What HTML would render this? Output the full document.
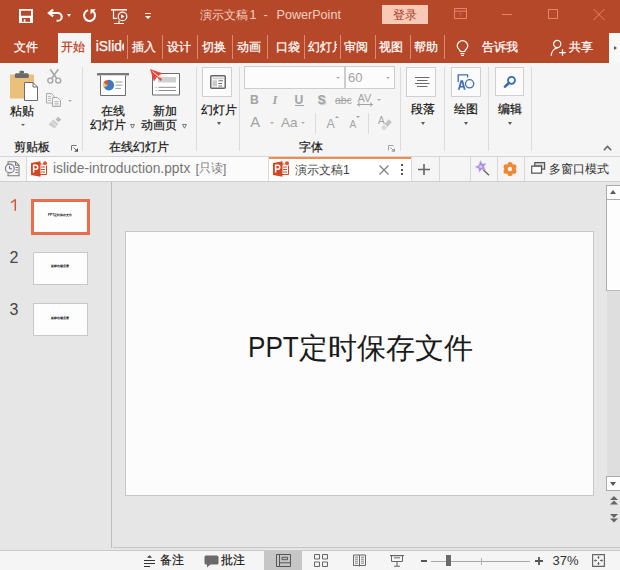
<!DOCTYPE html>
<html><head><meta charset="utf-8">
<style>
*{margin:0;padding:0;box-sizing:border-box}
html,body{width:620px;height:570px;overflow:hidden;background:#E6E6E6;font-family:"Liberation Sans",sans-serif}
.a{position:absolute}
.t{position:absolute;white-space:nowrap;line-height:1}
svg{position:absolute;overflow:visible}
.tsep{position:absolute;top:35px;width:1px;height:24px;background:#D98A74}
.tab{color:#fff;font-size:12.2px;top:40.5px;-webkit-text-stroke:0.25px currentColor}
.gsep{position:absolute;top:67px;width:1px;height:84px;background:#DCDCDC}
.rl{font-size:12px;color:#141414;-webkit-text-stroke:0.2px currentColor}
.gl{font-size:12px;color:#141414;-webkit-text-stroke:0.2px currentColor}
.dd{position:absolute;width:0;height:0;border-left:3px solid transparent;border-right:3px solid transparent;border-top:3px solid #5A5A5A}
.ddl{position:absolute;width:0;height:0;border-left:2.8px solid transparent;border-right:2.8px solid transparent;border-top:2.8px solid #ADADAD}
.box{position:absolute;background:#FBFBFB;border:1px solid #D0D0D0}
.csep{position:absolute;top:157px;width:1px;height:24px;background:#D8D8D8}
.fg{color:#A3A3A3}
</style></head><body>
<!-- ===== title bar + tabs ===== -->
<div class="a" style="left:0;top:0;width:620px;height:63px;background:#B6482A"></div>
<svg style="left:19px;top:9px" width="14" height="14" viewBox="0 0 14 14"><path d="M0 0H14V14H0Z" fill="#fff"/><path d="M2 1.8H12V6.2Q12 6.8 11.4 6.8H2.6Q2 6.8 2 6.2Z" fill="#B6482A"/><path d="M3 8.9H11V12.8H3Z" fill="#B6482A"/><path d="M4.8 10.2H6.4V12.8H4.8Z" fill="#fff"/></svg>
<svg style="left:47px;top:9px" width="16" height="14" viewBox="0 0 16 14"><path d="M2 4H10.8A3.9 3.9 0 0 1 10.8 11.8H9.6" fill="none" stroke="#fff" stroke-width="2"/><path d="M6.2 0.6L1.9 4L6.2 7.4" fill="none" stroke="#fff" stroke-width="2.2"/></svg>
<div class="a" style="left:67px;top:14px;width:0;height:0;border-left:2.5px solid transparent;border-right:2.5px solid transparent;border-top:3px solid #fff"></div>
<svg style="left:82px;top:9px" width="15" height="14" viewBox="0 0 15 14"><path d="M6.1 1.1A5.5 5.5 0 1 0 11.4 2.5" fill="none" stroke="#fff" stroke-width="2"/><path d="M8.5 0.3H13.8L8.5 5.2Z" fill="#fff"/></svg>
<svg style="left:111px;top:9px" width="17" height="15" viewBox="0 0 17 15"><path d="M0 0.8H16" fill="none" stroke="#fff" stroke-width="1.5"/><path d="M2.5 1V9.4H6.2" fill="none" stroke="#fff" stroke-width="1.2"/><circle cx="11.5" cy="7.4" r="4.3" fill="none" stroke="#fff" stroke-width="1.2"/><path d="M10.2 5.2V9.6L13.5 7.4Z" fill="#fff"/><path d="M3 14.5H13 M8 11.6V14.3" fill="none" stroke="#fff" stroke-width="1.2"/></svg>
<div class="a" style="left:145px;top:12.5px;width:6px;height:1.5px;background:#fff"></div>
<div class="a" style="left:144.5px;top:15.5px;width:0;height:0;border-left:3.5px solid transparent;border-right:3.5px solid transparent;border-top:3.5px solid #fff"></div>
<div class="t" style="left:199.5px;top:8.5px;font-size:12.2px;color:#F4CEC1">演示文稿</div>
<div class="t" style="left:249.5px;top:8.5px;font-size:12.5px;color:#F4CEC1">1</div>
<div class="t" style="left:263.5px;top:8.5px;font-size:12.5px;color:#F4CEC1">-</div>
<div class="t" style="left:276.5px;top:8.5px;font-size:12.6px;color:#F4CEC1">PowerPoint</div>
<div class="a" style="left:382px;top:5px;width:46px;height:19px;background:#F8C9B7"></div>
<div class="t" style="left:392.5px;top:8.5px;font-size:12.2px;color:#A8401F">登录</div>
<svg style="left:454px;top:8px" width="13" height="11" viewBox="0 0 13 11"><path d="M0.5 0.5H12.5V10.5H0.5Z M0.5 3.2H12.5" fill="none" stroke="#E5846B" stroke-width="1"/><path d="M6.5 5V9 M4.8 6.5L6.5 4.8L8.2 6.5" fill="none" stroke="#C9604A" stroke-width="1"/></svg>
<div class="a" style="left:502px;top:14px;width:10px;height:1px;background:#E5846B"></div>
<div class="a" style="left:548px;top:9px;width:10px;height:10px;border:1px solid #E5846B"></div>
<svg style="left:593px;top:9px" width="12" height="11" viewBox="0 0 12 11"><path d="M0.5 0L11.5 11 M11.5 0L0.5 11" fill="none" stroke="#E5846B" stroke-width="1"/></svg>

<div class="a" style="left:58px;top:33px;width:33px;height:30px;background:#F5F5F5"></div>
<div class="t tab" style="left:14px">文件</div>
<div class="t tab" style="left:61px;color:#BE3E22">开始</div>
<div class="a" style="left:95px;top:33px;width:28.5px;height:29px;overflow:hidden"><div class="t tab" style="left:0.8px;top:7.3px;font-size:13.8px">iSlide</div></div>
<div class="tsep" style="left:127px"></div>
<div class="t tab" style="left:131.5px">插入</div>
<div class="tsep" style="left:162px"></div>
<div class="t tab" style="left:166.5px">设计</div>
<div class="tsep" style="left:197px"></div>
<div class="t tab" style="left:202px">切换</div>
<div class="tsep" style="left:232px"></div>
<div class="t tab" style="left:237px">动画</div>
<div class="tsep" style="left:267px"></div>
<div class="t tab" style="left:276px">口袋</div>
<div class="tsep" style="left:304px"></div>
<div class="a" style="left:307px;top:33px;width:29.5px;height:29px;overflow:hidden"><div class="t tab" style="left:0.5px;top:7.5px">幻灯片</div></div>
<div class="tsep" style="left:340px"></div>
<div class="t tab" style="left:343.5px">审阅</div>
<div class="tsep" style="left:375px"></div>
<div class="t tab" style="left:378.5px">视图</div>
<div class="tsep" style="left:409.5px"></div>
<div class="t tab" style="left:413.5px">帮助</div>
<div class="tsep" style="left:444px"></div>
<svg style="left:456px;top:41px" width="13" height="15" viewBox="0 0 13 15"><path d="M4.3 10.5C4.3 8.5 1.2 7.5 1.2 5A5.3 5.3 0 0 1 11.8 5C11.8 7.5 8.7 8.5 8.7 10.5Z M4.5 12.5H8.5 M5 14.3H8" fill="none" stroke="#fff" stroke-width="1.2"/></svg>
<div class="t tab" style="left:482px">告诉我</div>
<svg style="left:550px;top:40px" width="16" height="16" viewBox="0 0 16 16"><circle cx="7.2" cy="4" r="3.6" fill="none" stroke="#fff" stroke-width="1.2"/><path d="M1.2 15.8C1.4 11.8 3.8 8.4 7.5 8.1" fill="none" stroke="#fff" stroke-width="1.2"/><path d="M12.5 9.3V15.8 M9.2 12.6H15.8" fill="none" stroke="#fff" stroke-width="1.3"/></svg>
<div class="t tab" style="left:569px">共享</div>
<div class="a" style="left:609px;top:33px;width:11px;height:30px;background:#F8F8F8"></div>
<div class="a" style="left:614px;top:46px;width:0;height:0;border-top:2.5px solid transparent;border-bottom:2.5px solid transparent;border-left:3.5px solid #555"></div>

<!-- ===== ribbon ===== -->
<div class="a" style="left:0;top:63px;width:620px;height:94px;background:#F5F5F5;border-bottom:1px solid #D5D5D5"></div>
<!-- clipboard -->
<svg style="left:10px;top:70px" width="29" height="32" viewBox="0 0 29 32"><path d="M0 4.5H24V28.5H0Z" fill="#EBC07A"/><rect x="4.8" y="3.3" width="14" height="4.6" rx="1.5" fill="#6A6A6A"/><rect x="9.5" y="0.8" width="4.5" height="3" rx="1" fill="#6A6A6A"/><path d="M14.5 12.5H23L27.5 17V30.5H14.5Z" fill="#fff" stroke="#6D6D6D" stroke-width="1"/><path d="M23 12.5V17H27.5" fill="none" stroke="#6D6D6D" stroke-width="1"/></svg>
<div class="t rl" style="left:9.5px;top:104.5px">粘贴</div>
<div class="dd" style="left:20.5px;top:124px;border-left-width:2.5px;border-right-width:2.5px;border-top-width:2.5px"></div>
<svg style="left:47px;top:69px" width="15" height="15" viewBox="0 0 15 15"><path d="M3.2 0.3L9.6 9.3 M11.3 0.3L4.9 9.3" fill="none" stroke="#A6A6A6" stroke-width="1.6"/><circle cx="3.3" cy="11.6" r="2.5" fill="none" stroke="#A6A6A6" stroke-width="1.4"/><circle cx="11.2" cy="11.6" r="2.5" fill="none" stroke="#A6A6A6" stroke-width="1.4"/></svg>
<svg style="left:46px;top:93px" width="16" height="15" viewBox="0 0 16 15"><path d="M0.5 0.5H5.5L8 3V10H0.5Z" fill="#F3F3F3" stroke="#ABABAB" stroke-width="1"/><path d="M2 3.5H5 M2 5.5H5 M2 7.5H5" stroke="#BDBDBD" stroke-width="1"/><path d="M6.5 4.5H11.5L14.5 7.5V13.5H6.5Z" fill="#F3F3F3" stroke="#ABABAB" stroke-width="1"/><path d="M8.5 8.5H12.5 M8.5 10.3H12.5 M8.5 12H12.5" stroke="#BDBDBD" stroke-width="1"/></svg>
<div class="ddl" style="left:68px;top:99.5px"></div>
<svg style="left:48px;top:116px" width="14" height="13" viewBox="0 0 14 13"><path d="M10 0.8L13.2 3.6L10.6 6.3L7.6 3.4Z" fill="#B9B9B9"/><path d="M5.2 3.4L10.2 8L6.6 12.6L0.4 8.4Z" fill="#CDCDCD"/><path d="M3.2 5.4L8.2 10" stroke="#E2E2E2" stroke-width="1.2"/></svg>
<div class="t gl" style="left:13.5px;top:140.5px">剪贴板</div>
<svg style="left:71px;top:145px" width="8" height="7" viewBox="0 0 8 7"><path d="M0.5 5.5V0.5H5.5 M2.5 2.5L5 5" fill="none" stroke="#777" stroke-width="1"/><path d="M7 3V6.8H3.2Z" fill="#555"/></svg>
<div class="gsep" style="left:82px"></div>
<!-- online slides -->
<svg style="left:97px;top:73px" width="32" height="23" viewBox="0 0 32 23"><path d="M0 0H32V2.5H0Z" fill="#7A7A7A"/><path d="M3.5 2.5V22.5H28.5V2.5" fill="#fff" stroke="#6D6D6D" stroke-width="1"/><path d="M11.1 6.9A5.3 5.3 0 1 1 6.5 12.2Z" fill="#3C7BC0"/><path d="M11.1 12.2L11.1 6.9A5.3 5.3 0 0 0 6.3 10Z" fill="#D8573A"/><path d="M11.1 12.2L6.3 10A5.3 5.3 0 0 0 6.5 14.8Z" fill="#EBC07A"/><path d="M18.4 9H25.6 M18.4 12.2H25.6 M18.4 15.4H24" stroke="#9E9E9E" stroke-width="1"/></svg>
<div class="t rl" style="left:100.5px;top:105px">在线</div>
<div class="t rl" style="left:89.5px;top:119px">幻灯片</div>
<svg style="left:130px;top:124px" width="5" height="5" viewBox="0 0 5 5"><path d="M0.5 0.5H4.5L2.5 4.2Z" fill="none" stroke="#6A6A6A" stroke-width="0.9"/></svg>
<svg style="left:149px;top:68px" width="32" height="28" viewBox="0 0 32 28"><path d="M3.5 5.5H30.5V27H3.5Z" fill="#fff" stroke="#6D6D6D" stroke-width="1"/><path d="M9 9H27V14.5H9Z" fill="#CFCFCF"/><path d="M6.7 19.3H7.7 M9.5 19.3H27 M6.7 22.5H7.7 M9.5 22.5H27" stroke="#8E8E8E" stroke-width="1"/><path d="M1 1L14 5.5L9.5 7.5L13 11.5L11.5 13L8 9L5 13.5Z" fill="#E8473A"/><path d="M3.5 3.5L10.5 9.5" stroke="#fff" stroke-width="0.9"/></svg>
<div class="t rl" style="left:152.5px;top:105px">新加</div>
<div class="t rl" style="left:141px;top:119px">动画页</div>
<svg style="left:182px;top:124px" width="5" height="5" viewBox="0 0 5 5"><path d="M0.5 0.5H4.5L2.5 4.2Z" fill="none" stroke="#6A6A6A" stroke-width="0.9"/></svg>
<div class="t gl" style="left:108.5px;top:140.5px">在线幻灯片</div>
<div class="gsep" style="left:196px"></div>
<!-- slides -->
<div class="box" style="left:202px;top:67px;width:30px;height:30px"></div>
<svg style="left:210px;top:75px" width="16" height="14" viewBox="0 0 16 14"><rect x="0.75" y="0.75" width="14.5" height="12.5" rx="1" fill="#fff" stroke="#666" stroke-width="1.5"/><path d="M2.5 2.5H13.5V4.3H2.5Z" fill="#CFCFCF"/><path d="M2.5 5.3H7V11.5H2.5Z" fill="#CACACA"/><path d="M8.5 5.8H13 M8.5 8.5H12 M8.5 11H12" stroke="#6A6A6A" stroke-width="1"/></svg>
<div class="t rl" style="left:201px;top:103.5px">幻灯片</div>
<div class="dd" style="left:217px;top:122px;border-left-width:2.5px;border-right-width:2.5px"></div>
<div class="gsep" style="left:239px"></div>
<!-- font -->
<div class="box" style="left:244px;top:66px;width:101px;height:23px;background:#FCFCFC;border-color:#CDCDCD"></div>
<div class="box" style="left:345px;top:66px;width:50px;height:23px;background:#FCFCFC;border-color:#CDCDCD"></div>
<div class="ddl" style="left:335.5px;top:77px"></div>
<div class="ddl" style="left:385.5px;top:77px"></div>
<div class="t fg" style="left:348px;top:71px;font-size:13px">60</div>
<div class="t fg" style="left:250px;top:93.5px;font-size:12.2px;font-weight:bold">B</div>
<div class="t fg" style="left:272.5px;top:93.5px;font-size:12.5px;font-style:italic;font-weight:bold;font-family:'Liberation Serif',serif">I</div>
<div class="t fg" style="left:294.5px;top:93.5px;font-size:12.2px;font-weight:bold">U</div>
<div class="a" style="left:294.5px;top:105px;width:9px;height:1px;background:#A3A3A3"></div>
<div class="t fg" style="left:317.5px;top:93.5px;font-size:12.2px;font-weight:bold;text-shadow:1px 1px 1px #C8C8C8">S</div>
<div class="t fg" style="left:335px;top:95px;font-size:10.5px">abc</div>
<div class="a" style="left:335px;top:100px;width:16px;height:1px;background:#A3A3A3"></div>
<div class="t fg" style="left:357.5px;top:92.5px;font-size:11px">AV</div>
<svg style="left:357px;top:102px" width="16" height="5" viewBox="0 0 16 5"><path d="M0.5 2.5H15.5 M3 0.5L0.5 2.5L3 4.5 M13 0.5L15.5 2.5L13 4.5" fill="none" stroke="#A3A3A3" stroke-width="1"/></svg>
<div class="ddl" style="left:377px;top:99px"></div>
<div class="t fg" style="left:250.3px;top:114.8px;font-size:14.8px">A</div>
<div class="ddl" style="left:269.5px;top:122px"></div>
<div class="t fg" style="left:281px;top:116px;font-size:13.5px">Aa</div>
<div class="ddl" style="left:300.5px;top:122px"></div>
<div class="a" style="left:315px;top:113px;width:1px;height:21px;background:#DCDCDC"></div>
<div class="t fg" style="left:326.5px;top:118px;font-size:12.5px">A</div>
<div class="a" style="left:334.5px;top:116px;width:0;height:0;border-left:2.3px solid transparent;border-right:2.3px solid transparent;border-bottom:2.3px solid #A3A3A3"></div>
<div class="t fg" style="left:349.5px;top:120px;font-size:10px">A</div>
<div class="a" style="left:356px;top:116px;width:0;height:0;border-left:2.3px solid transparent;border-right:2.3px solid transparent;border-top:2.3px solid #A3A3A3"></div>
<div class="a" style="left:368px;top:113px;width:1px;height:21px;background:#DCDCDC"></div>
<div class="t fg" style="left:378px;top:115.5px;font-size:10px">A</div>
<svg style="left:380px;top:118px" width="12" height="13" viewBox="0 0 12 13"><path d="M4.5 6L8.8 1.2L11.8 4.2L7.5 9Z" fill="#C4C4C4"/><path d="M3.8 6.8L6.8 9.8L5 11.8H2.5L1.5 9.5Z" fill="#D8D8D8"/></svg>
<div class="t gl" style="left:298.5px;top:141px">字体</div>
<svg style="left:387.5px;top:145px" width="8" height="7" viewBox="0 0 8 7"><path d="M0.5 5.5V0.5H5.5 M2.5 2.5L5 5" fill="none" stroke="#A0A0A0" stroke-width="1"/><path d="M7 3V6.8H3.2Z" fill="#9A9A9A"/></svg>
<div class="gsep" style="left:400px"></div>
<!-- paragraph / drawing / editing -->
<div class="box" style="left:406px;top:67px;width:30px;height:30px"></div>
<svg style="left:415px;top:77px" width="15" height="10" viewBox="0 0 15 10"><path d="M0 0.5H14.5 M2 3.5H12.5 M0 6.5H14.5 M2 9.5H12.5" stroke="#6A6A6A" stroke-width="1"/></svg>
<div class="t rl" style="left:410.5px;top:102.5px">段落</div>
<div class="dd" style="left:421px;top:122px;border-left-width:2.5px;border-right-width:2.5px"></div>
<div class="gsep" style="left:443.5px"></div>
<div class="box" style="left:450.5px;top:67px;width:30px;height:30px"></div>
<svg style="left:457px;top:74px" width="17" height="17" viewBox="0 0 17 17"><path d="M1.2 8.2V0.8H10.6V3.6" fill="none" stroke="#3E6DB5" stroke-width="1.3"/><circle cx="12.6" cy="9.8" r="4.1" fill="none" stroke="#3E6DB5" stroke-width="1.3"/><path d="M0.9 15.7L3.5 6.2H6L8.6 15.7H6.8L6.2 13.5H3.3L2.7 15.7Z M3.8 11.9H5.7L4.75 8.2Z" fill="#3E6DB5" fill-rule="evenodd" stroke="#FBFBFB" stroke-width="0.9" paint-order="stroke"/></svg>
<div class="t rl" style="left:454px;top:102.5px">绘图</div>
<div class="dd" style="left:464px;top:122px;border-left-width:2.5px;border-right-width:2.5px"></div>
<div class="gsep" style="left:488px"></div>
<div class="box" style="left:494.5px;top:67px;width:29px;height:29px"></div>
<svg style="left:503px;top:75px" width="13" height="13" viewBox="0 0 13 13"><circle cx="8.5" cy="5.3" r="3.5" fill="none" stroke="#3B69AA" stroke-width="1.8"/><path d="M5.9 8L2 11.6" stroke="#3B69AA" stroke-width="2.6" stroke-linecap="round"/></svg>
<div class="t rl" style="left:497.5px;top:102.5px">编辑</div>
<div class="dd" style="left:507.5px;top:122px;border-left-width:2.5px;border-right-width:2.5px"></div>
<div class="gsep" style="left:531px"></div>
<svg style="left:603px;top:145px" width="9" height="6" viewBox="0 0 9 6"><path d="M0.8 5.2L4.5 1.5L8.2 5.2" fill="none" stroke="#666" stroke-width="1.6"/></svg>

<!-- ===== doc tabs ===== -->
<div class="a" style="left:0;top:157px;width:620px;height:25px;background:#F5F5F5;border-bottom:1px solid #CFCFCF"></div>
<div class="a" style="left:27px;top:157px;width:241px;height:24px;background:#FBFBFB"></div>
<div class="a" style="left:268px;top:157px;width:143px;height:24px;background:#fff;border-top:2px solid #F08E4E"></div>
<div class="csep" style="left:26px"></div>
<div class="csep" style="left:268px"></div>
<div class="csep" style="left:411px"></div>
<div class="csep" style="left:438.5px"></div>
<div class="csep" style="left:469.5px"></div>
<div class="csep" style="left:496.5px"></div>
<div class="csep" style="left:523.5px"></div>
<svg style="left:4px;top:161px" width="17" height="16" viewBox="0 0 17 16"><path d="M4 4V0.7H11.5L15 4.2V14.7H4V12.5 M11.5 0.7V4.2H15 M11.5 6.5H14 M11.5 9H14 M11.5 11.5H14" fill="none" stroke="#7A7A7A" stroke-width="1.1"/><circle cx="5.8" cy="7.5" r="4.4" fill="#F3F3F3" stroke="#7A7A7A" stroke-width="1.1"/><path d="M5.6 4.8V7.8H8" fill="none" stroke="#6060B0" stroke-width="1"/></svg>
<svg style="left:31px;top:161px" width="17" height="16" viewBox="0 0 17 16"><path d="M8 3H15.5V13.5H8Z" fill="#fff" stroke="#D24726" stroke-width="1"/><path d="M10 6H14 M10 8.5H14 M10 11H14" stroke="#D24726" stroke-width="1"/><path d="M0 2L9.5 0.3V15.7L0 14Z" fill="#D24726"/><path d="M2.6 11.5V4.3H5C7.3 4.3 7.3 8.3 5 8.3H2.6" fill="none" stroke="#fff" stroke-width="1.5"/><circle cx="14" cy="2.3" r="2.6" fill="#fff"/><circle cx="14" cy="2.3" r="2" fill="#F0502A"/></svg>
<div class="t" style="left:53px;top:161.5px;font-size:13.8px;color:#767676">islide-introduction.pptx</div><div class="t" style="left:195.5px;top:162px;font-size:13px;color:#7A7A7A">[</div><div class="t" style="left:199px;top:163px;font-size:11.8px;color:#7A7A7A">只读</div><div class="t" style="left:222.8px;top:162px;font-size:13px;color:#7A7A7A">]</div>
<svg style="left:273px;top:161px" width="17" height="16" viewBox="0 0 17 16"><path d="M8 3H15.5V13.5H8Z" fill="#fff" stroke="#D24726" stroke-width="1"/><path d="M10 6H14 M10 8.5H14 M10 11H14" stroke="#D24726" stroke-width="1"/><path d="M0 2L9.5 0.3V15.7L0 14Z" fill="#D24726"/><path d="M2.6 11.5V4.3H5C7.3 4.3 7.3 8.3 5 8.3H2.6" fill="none" stroke="#fff" stroke-width="1.5"/><circle cx="14" cy="2.3" r="2.6" fill="#fff"/><circle cx="14" cy="2.3" r="2" fill="#F0502A"/></svg>
<div class="t" style="left:295px;top:163.5px;font-size:12.2px;color:#444">演示文稿1</div>
<svg style="left:379px;top:165px" width="10" height="10" viewBox="0 0 10 10"><path d="M0.5 0.5L9.5 9.5 M9.5 0.5L0.5 9.5" stroke="#7A7A7A" stroke-width="1.1"/></svg>
<div class="a" style="left:401px;top:164px;width:2px;height:2px;background:#555"></div>
<div class="a" style="left:401px;top:168.5px;width:2px;height:2px;background:#555"></div>
<div class="a" style="left:401px;top:173px;width:2px;height:2px;background:#555"></div>
<svg style="left:418px;top:164px" width="12" height="11" viewBox="0 0 12 11"><path d="M6 0V11 M0 5.5H12" stroke="#666" stroke-width="1.6"/></svg>
<svg style="left:475px;top:160px" width="15" height="16" viewBox="0 0 15 16"><path d="M8 9.5L14 15.3" stroke="#666" stroke-width="1.4"/><path d="M5.5 0.5L7.3 4L11 3.5L8.8 6.7L10.5 10L6.8 9L4.2 12.3L3.8 8.5L0.3 7L3.8 5.3Z" fill="#A58BDA" stroke="#C9B8EE" stroke-width="0.6"/><circle cx="5.8" cy="6.6" r="1.6" fill="#D6C8F3"/></svg>
<svg style="left:503px;top:161.5px" width="14" height="14" viewBox="0 0 14 14"><g fill="#EE8833"><circle cx="7" cy="2.6" r="2.6"/><circle cx="10.8" cy="4.8" r="2.6"/><circle cx="10.8" cy="9.2" r="2.6"/><circle cx="7" cy="11.4" r="2.6"/><circle cx="3.2" cy="9.2" r="2.6"/><circle cx="3.2" cy="4.8" r="2.6"/><circle cx="7" cy="7" r="4.5"/></g><circle cx="7" cy="7" r="2.2" fill="#F3F3F3"/></svg>
<svg style="left:531px;top:162px" width="15" height="12" viewBox="0 0 15 12"><path d="M3.8 0.7H13.6V7.2H10.5V4.2H3.8Z" fill="#DADADA" stroke="#555" stroke-width="1.2"/><path d="M0.7 4.2H10.5V11.2H0.7Z" fill="#fff" stroke="#555" stroke-width="1.2"/></svg>
<div class="t" style="left:549px;top:163px;font-size:12px;color:#333">多窗口模式</div>

<!-- ===== main ===== -->
<div class="a" style="left:111px;top:182px;width:1px;height:366px;background:#BDBDBD"></div>
<svg style="left:10px;top:199px" width="7" height="12" viewBox="0 0 7 12"><path d="M5.3 0.3V11.8" stroke="#D35230" stroke-width="1.5"/><path d="M5.3 0.8L1 3.6" stroke="#D35230" stroke-width="1.3"/></svg>
<div class="a" style="left:31px;top:199px;width:59px;height:36px;background:#FDFDFD;border:3px solid #EA6D4C"></div>
<div class="t" style="left:48px;top:214px;font-size:3.1px;font-weight:bold;color:#222">PPT定时保存文件</div>
<div class="t" style="left:9.5px;top:250px;font-size:16px;color:#444">2</div>
<div class="a" style="left:33px;top:252px;width:55px;height:33px;background:#FDFDFD;border:1px solid #C8C8C8"></div>
<div class="t" style="left:50.5px;top:265px;font-size:3.3px;font-weight:bold;color:#222">鼠标右键设置</div>
<div class="t" style="left:9.5px;top:301.5px;font-size:16px;color:#444">3</div>
<div class="a" style="left:33px;top:303px;width:55px;height:33px;background:#FDFDFD;border:1px solid #C8C8C8"></div>
<div class="t" style="left:50.5px;top:316.5px;font-size:3.3px;font-weight:bold;color:#222">鼠标右键设置</div>

<div class="a" style="left:125px;top:231px;width:469px;height:265px;background:#FCFCFC;border:1px solid #C6C6C6"></div>
<div class="t" style="left:247.5px;top:331.5px;font-size:30px;color:#1A1A1A;transform:scaleX(0.87);transform-origin:0 0">PPT</div>
<div class="t" style="left:298.5px;top:333.8px;font-size:29px;color:#1A1A1A">定时保存文件</div>

<!-- scrollbar -->
<div class="a" style="left:606px;top:291px;width:14px;height:185px;background:#DEDEDE;border-left:1px solid #E8E8E8"></div>
<div class="a" style="left:606px;top:185px;width:14px;height:15px;background:#FDFDFD;border-left:1px solid #ABABAB;border-top:1px solid #ABABAB;border-bottom:1px solid #ABABAB"></div>
<div class="a" style="left:606px;top:200px;width:14px;height:91px;background:#FDFDFD;border-left:1px solid #ABABAB;border-bottom:1px solid #BDBDBD"></div>
<div class="a" style="left:606px;top:476px;width:14px;height:15px;background:#FDFDFD;border:1px solid #ABABAB;border-right:none"></div>
<div class="a" style="left:609.8px;top:189.8px;width:0;height:0;border-left:3.8px solid transparent;border-right:3.8px solid transparent;border-bottom:4.2px solid #595959"></div>
<div class="a" style="left:609.8px;top:481.8px;width:0;height:0;border-left:3.8px solid transparent;border-right:3.8px solid transparent;border-top:4.2px solid #595959"></div>
<svg style="left:609.5px;top:495.5px" width="8" height="9" viewBox="0 0 8 9"><path d="M4 0L8 4H0Z M4 4.6L8 8.6H0Z" fill="#666"/></svg>
<svg style="left:609.5px;top:513.5px" width="8" height="9" viewBox="0 0 8 9"><path d="M0 0H8L4 4Z M0 4.4H8L4 8.4Z" fill="#666"/></svg>

<!-- ===== status bar ===== -->
<div class="a" style="left:113px;top:547px;width:507px;height:1px;background:#C6C6C6"></div><div class="a" style="left:0;top:550px;width:620px;height:20px;background:#F5F5F5;border-top:1px solid #CACACA"></div>
<svg style="left:144px;top:555px" width="12" height="12" viewBox="0 0 12 12"><path d="M3 2.8L5.5 0.2L8 2.8Z" fill="#333"/><path d="M0 5.5H11 M0 8.5H11 M0 11.5H6" stroke="#333" stroke-width="1"/></svg>
<div class="t" style="left:160px;top:554px;font-size:12px;color:#1A1A1A;-webkit-text-stroke:0.2px currentColor">备注</div>
<svg style="left:204px;top:555px" width="15" height="13" viewBox="0 0 15 13"><path d="M2 0.5H13A1.5 1.5 0 0 1 14.5 2V8A1.5 1.5 0 0 1 13 9.5H6.5L3 12.5V9.5H2A1.5 1.5 0 0 1 0.5 8V2A1.5 1.5 0 0 1 2 0.5Z" fill="#6A6A6A"/></svg>
<div class="t" style="left:221px;top:554px;font-size:12px;color:#1A1A1A;-webkit-text-stroke:0.2px currentColor">批注</div>
<div class="a" style="left:264px;top:551px;width:38px;height:19px;background:#C6C6C6"></div>
<svg style="left:276px;top:554px" width="15" height="13" viewBox="0 0 15 13"><path d="M0.5 0.5H14.5V12.5H0.5Z M3.5 0.5V12.5 M3.5 8.8H14.5 M6 3.3H11.5V5.7H6Z" fill="none" stroke="#555" stroke-width="1"/></svg>
<svg style="left:314px;top:554px" width="14" height="13" viewBox="0 0 14 13"><path d="M0.5 0.5H5.5V5H0.5Z M8.5 0.5H13.5V5H8.5Z M0.5 8H5.5V12.5H0.5Z M8.5 8H13.5V12.5H8.5Z" fill="none" stroke="#666" stroke-width="1"/></svg>
<svg style="left:352.5px;top:554px" width="13" height="13" viewBox="0 0 13 13"><path d="M0.5 1H6.5V11.5H0.5Z M6.5 1H12.5V11.5H6.5Z M6.5 11.5V12.5" fill="none" stroke="#666" stroke-width="1"/><path d="M2 3.2H5 M2 5.2H5 M2 7.2H5 M2 9.2H5 M8 3.2H11 M8 5.2H11 M8 7.2H11 M8 9.2H11" stroke="#777" stroke-width="0.9"/></svg>
<svg style="left:390px;top:555px" width="14" height="12" viewBox="0 0 14 12"><path d="M0 0.6H14" stroke="#666" stroke-width="1.2"/><path d="M1.5 1V6.5H12.5V1 M4 2.8H10" fill="none" stroke="#666" stroke-width="1"/><path d="M7 6.5V10.8 M4 11.3H10" stroke="#666" stroke-width="1.1"/></svg>
<div class="a" style="left:421px;top:560px;width:6px;height:2px;background:#555"></div>
<div class="a" style="left:431px;top:561px;width:99px;height:1px;background:#A8A8A8"></div>
<div class="a" style="left:481px;top:558px;width:1px;height:7px;background:#B0B0B0"></div>
<div class="a" style="left:446px;top:555px;width:5px;height:11px;background:#6A6A6A"></div>
<svg style="left:534.5px;top:557px" width="8" height="8" viewBox="0 0 8 8"><path d="M4 0V8 M0 4H8" stroke="#555" stroke-width="1.8"/></svg>
<div class="t" style="left:552.5px;top:554px;font-size:13px;color:#333">37%</div>
<svg style="left:592px;top:554px" width="13" height="13" viewBox="0 0 13 13"><path d="M0.6 0.6H12.4V12.4H0.6Z" fill="none" stroke="#666" stroke-width="1.2"/><path d="M6.5 2.5V5 M6.5 8V10.5 M2.5 6.5H5 M8 6.5H10.5" stroke="#666" stroke-width="1"/><path d="M5.3 3.5L6.5 2.3L7.7 3.5 M5.3 9.5L6.5 10.7L7.7 9.5 M3.5 5.3L2.3 6.5L3.5 7.7 M9.5 5.3L10.7 6.5L9.5 7.7" fill="none" stroke="#666" stroke-width="0.9"/></svg>
</body></html>
